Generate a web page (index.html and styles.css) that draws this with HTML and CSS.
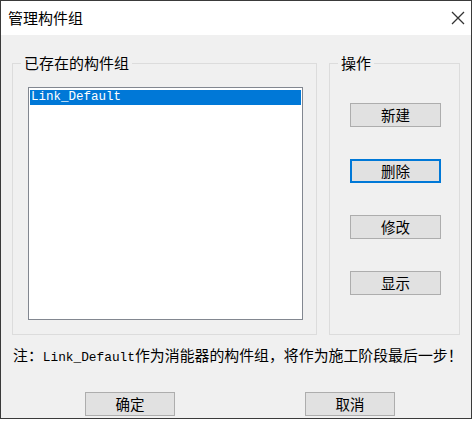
FILE: index.html
```html
<!DOCTYPE html>
<html lang="zh">
<head>
<meta charset="utf-8">
<link rel="stylesheet" href="styles.css">
</head>
<body>
<div class="window">
  <div class="titlebar">
    <span class="title">管理构件组</span>
    <svg class="close" width="14" height="14" viewBox="0 0 14 14"><path d="M1 1L13 13M13 1L1 13" stroke="#333" stroke-width="1.3" fill="none"/></svg>
  </div>
  <div class="body">
    <div class="groups">
      <fieldset class="group group-list">
        <legend>已存在的构件组</legend>
        <div class="listbox">
          <div class="item selected">Link_Default</div>
        </div>
      </fieldset>
      <fieldset class="group group-ops">
        <legend>操作</legend>
        <div class="ops">
          <button class="btn">新建</button>
          <button class="btn focus">删除</button>
          <button class="btn">修改</button>
          <button class="btn">显示</button>
        </div>
      </fieldset>
    </div>
    <p class="note">注：<span class="mono">Link_Default</span>作为消能器的构件组，将作为施工阶段最后一步！</p>
    <div class="footer">
      <button class="btn wide">确定</button>
      <button class="btn wide">取消</button>
    </div>
  </div>
</div>
</body>
</html>
```
FILE: styles.css
```css
* { box-sizing: border-box; }
html, body { margin: 0; padding: 0; background: #fff; }
body { font-family: "Noto Sans CJK SC", "Noto Sans", sans-serif; color: #000; }

.window {
  width: 472px;
  height: 419px;
  border: 1px solid #3a3a3a;
  background: #f0f0f0;
  display: flex;
  flex-direction: column;
}
.titlebar {
  height: 34px;
  background: #fff;
  display: flex;
  align-items: center;
  justify-content: space-between;
  padding: 0 6px 0 7px;
}
.title { font-size: 15px; line-height: 18px; }
.close { display: block; margin-top: -1px; }

.body { padding: 19px 0 0 11px; display: flex; flex-direction: column; }
.groups { display: flex; gap: 12px; }

.group {
  margin: 0;
  padding: 0;
  border: 1px solid #dcdcdc;
  min-width: 0;
}
.group legend {
  margin-left: 8px;
  padding: 0 3px;
  font-size: 15px;
  line-height: 18px;
}
.group-list { width: 305px; height: 281px; }
.group-ops { width: 131px; height: 281px; }

.listbox {
  margin: 15px 13px 0 15px;
  height: 233px;
  background: #fff;
  border: 1px solid #828790;
  padding: 2px 1px;
}
.item {
  font-family: "Liberation Mono", monospace;
  font-size: 12.5px;
  line-height: 15px;
  height: 15px;
  padding-left: 1px;
  color: #000;
}
.item.selected { background: #0078d7; color: #fff; }

.ops {
  display: flex;
  flex-direction: column;
  gap: 32px;
  padding: 31px 0 0 20px;
}
.btn {
  font-family: "Noto Sans CJK SC", sans-serif;
  font-size: 14.5px;
  line-height: 18px;
  width: 91px;
  height: 24px;
  padding: 0;
  background: #e1e1e1;
  border: 1px solid #adadad;
  color: #000;
  border-radius: 0;
}
.btn.focus { border: 2px solid #0078d7; }
.btn.wide { width: 90px; }

.note {
  margin: 11px 0 0 1px;
  font-size: 14.9px;
  line-height: 18px;
  white-space: nowrap;
}
.mono {
  font-family: "Liberation Mono", monospace;
  font-size: 12.8px;
}
.footer {
  display: flex;
  gap: 130px;
  padding: 25px 0 0 73px;
}
```
